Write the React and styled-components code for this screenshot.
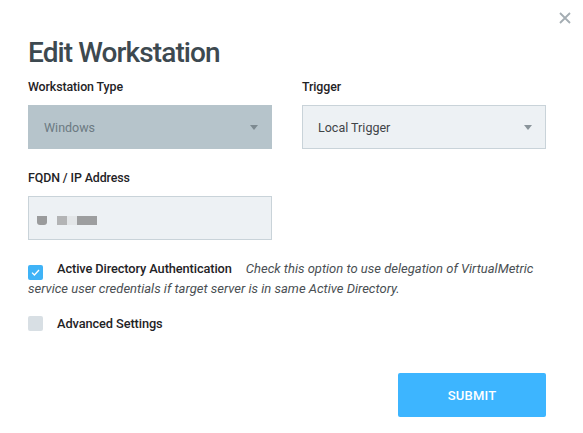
import React, {useState} from "react";
import styled, {createGlobalStyle} from "styled-components";

const GlobalStyle = createGlobalStyle`
    html, body {
        margin: 0;
        padding: 0;
        background: #ffffff;
    }
    body {
        font-family: Roboto, "Liberation Sans", Arial, sans-serif;
        color: #222;
    }
`;

const Modal = styled.div`
    position: relative;
    width: 583px;
    height: 433px;
    box-sizing: border-box;
    padding: 37px 37px 0 28px;
    background: #fff;
`;

const CloseButton = styled.button`
    position: absolute;
    top: 11px;
    right: 11px;
    width: 14px;
    height: 14px;
    padding: 0;
    border: none;
    background: transparent;
    cursor: pointer;
    display: flex;
`;

const Title = styled.h1`
    margin: 0 0 11px 0;
    font-family: Roboto, "Liberation Sans", sans-serif;
    font-size: 28px;
    font-weight: 500;
    letter-spacing: -0.9px;
    color: #3d4950;
    line-height: 32px;
`;

const FieldGrid = styled.div`
    display: grid;
    grid-template-columns: 244px 244px;
    column-gap: 30px;
    row-gap: 22px;
`;

const Field = styled.div`
    display: flex;
    flex-direction: column;
`;

const Label = styled.label`
    font-size: 12.4px;
    font-weight: 500;
    color: #1f2326;
    line-height: 14px;
    margin-bottom: 11px;
    letter-spacing: -0.1px;
`;

const Select = styled.div`
    height: 44px;
    box-sizing: border-box;
    display: flex;
    align-items: center;
    justify-content: space-between;
    padding: 0 13px 0 15px;
    background: ${props => props.disabled ? "#b6c4cb" : "#edf1f4"};
    border: 1px solid ${props => props.disabled ? "#b6c4cb" : "#c9d3d9"};
    color: ${props => props.disabled ? "#6c7a82" : "#3f4448"};
    font-size: 12.5px;
`;

const Caret = styled.span`
    width: 0;
    height: 0;
    border-left: 4px solid transparent;
    border-right: 4px solid transparent;
    border-top: 5px solid ${props => props.disabled ? "#7d8a91" : "#8a949a"};
`;

const Input = styled.div`
    height: 44px;
    box-sizing: border-box;
    display: flex;
    align-items: center;
    padding: 4px 8px 0 8px;
    background: #edf1f4;
    border: 1px solid #c9d3d9;
`;

const Blur = styled.span`
    display: inline-block;
    height: 9px;
    width: ${props => props.w}px;
    margin-left: ${props => props.gap || 0}px;
    background: ${props => props.shade};
    border-radius: ${props => props.round ? "0 0 3px 3px" : "0"};
    filter: blur(0.4px);
`;

const Options = styled.div`
    margin-top: 20px;
    display: flex;
    flex-direction: column;
    gap: 17px;
`;

const OptionRow = styled.div`
    font-size: 12.8px;
    line-height: 18px;
    color: #1f2326;
`;

const Check = styled.span`
    display: inline-flex;
    align-items: center;
    justify-content: center;
    vertical-align: -3px;
    width: 15px;
    height: 15px;
    border-radius: 2px;
    margin-right: 14px;
    background: ${props => props.checked ? "#3fb3f7" : "#d8dfe4"};
`;

const OptionLabel = styled.span`
    font-weight: 500;
    margin-right: 14px;
    letter-spacing: -0.1px;
`;

const Hint = styled.span`
    font-style: italic;
    color: #4a4f53;
    font-size: 13px;
`;

const Footer = styled.div`
    display: flex;
    justify-content: flex-end;
    margin-top: 40px;
`;

const SubmitButton = styled.button`
    width: 148px;
    height: 44px;
    border: none;
    border-radius: 2px;
    background: #3db5ff;
    color: #fff;
    font-family: Roboto, "Liberation Sans", sans-serif;
    font-size: 13px;
    font-weight: 500;
    letter-spacing: 0.2px;
    cursor: pointer;
`;

function CheckMark() {
    return (
        <svg width="9" height="7" viewBox="0 0 9 7">
            <path d="M1 3.6 L3.4 6 L8 1" fill="none" stroke="#fff" strokeWidth="1.3"/>
        </svg>
    );
}

export default function App() {
    const [adAuth, setAdAuth] = useState(true);
    const [advanced, setAdvanced] = useState(false);

    return (
        <Modal>
            <GlobalStyle/>
            <CloseButton aria-label="Close">
                <svg width="14" height="14" viewBox="0 0 14 14">
                    <path d="M2 2 L12 12 M12 2 L2 12" stroke="#a4adb3" strokeWidth="1.8"/>
                </svg>
            </CloseButton>
            <Title>Edit Workstation</Title>
            <FieldGrid>
                <Field>
                    <Label>Workstation Type</Label>
                    <Select disabled>
                        Windows
                        <Caret disabled/>
                    </Select>
                </Field>
                <Field>
                    <Label>Trigger</Label>
                    <Select>
                        Local Trigger
                        <Caret/>
                    </Select>
                </Field>
                <Field>
                    <Label>FQDN / IP Address</Label>
                    <Input>
                        <Blur w={10} shade="#9a9b9c" round/>
                        <Blur w={10} gap={10} shade="#b3b4b5"/>
                        <Blur w={10} shade="#e3e6e8"/>
                        <Blur w={20} shade="#9d9e9f"/>
                    </Input>
                </Field>
            </FieldGrid>
            <Options>
                <OptionRow onClick={() => setAdAuth(!adAuth)}>
                    <Check checked={adAuth}>{adAuth ? <CheckMark/> : null}</Check>
                    <OptionLabel>Active Directory Authentication</OptionLabel>
                    <Hint>Check this option to use delegation of VirtualMetric service user credentials if target server is in same Active Directory.</Hint>
                </OptionRow>
                <OptionRow onClick={() => setAdvanced(!advanced)}>
                    <Check checked={advanced}>{advanced ? <CheckMark/> : null}</Check>
                    <OptionLabel>Advanced Settings</OptionLabel>
                </OptionRow>
            </Options>
            <Footer>
                <SubmitButton>SUBMIT</SubmitButton>
            </Footer>
        </Modal>
    );
}
